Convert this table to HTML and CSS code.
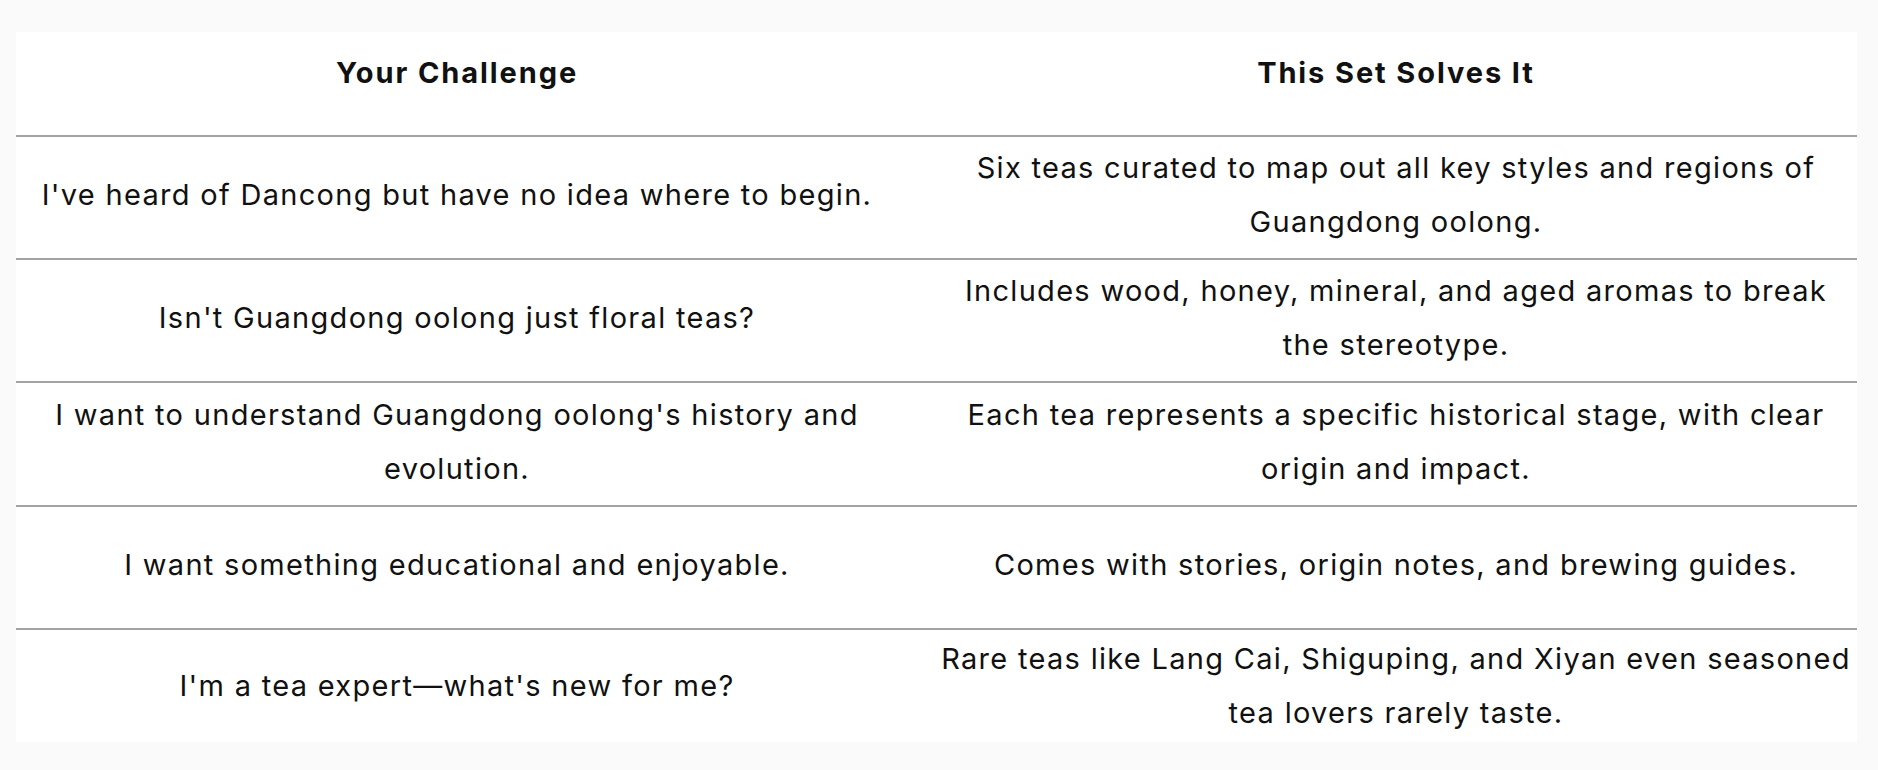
FILE: index.html
```html
<!DOCTYPE html>
<html lang="en">
<head>
<meta charset="utf-8">
<title>Your Challenge / This Set Solves It</title>
<link rel="stylesheet" href="styles.css">
</head>
<body>
<section class="compare">
  <div class="row head">
    <div class="cell">Your Challenge</div>
    <div class="cell">This Set Solves It</div>
  </div>
  <div class="row">
    <div class="cell">I've heard of Dancong but have no idea where to begin.</div>
    <div class="cell">Six teas curated to map out all key styles and regions of Guangdong oolong.</div>
  </div>
  <div class="row">
    <div class="cell">Isn't Guangdong oolong just floral teas?</div>
    <div class="cell">Includes wood, honey, mineral, and aged aromas to break the stereotype.</div>
  </div>
  <div class="row tall">
    <div class="cell">I want to understand Guangdong oolong's history and evolution.</div>
    <div class="cell">Each tea represents a specific historical stage, with clear origin and impact.</div>
  </div>
  <div class="row">
    <div class="cell">I want something educational and enjoyable.</div>
    <div class="cell">Comes with stories, origin notes, and brewing guides.</div>
  </div>
  <div class="row last">
    <div class="cell">I'm a tea expert—what's new for me?</div>
    <div class="cell">Rare teas like Lang Cai, Shiguping, and Xiyan even seasoned tea lovers rarely taste.</div>
  </div>
</section>
</body>
</html>
```
FILE: styles.css
```css
html, body {
  margin: 0;
  padding: 0;
}
body {
  background: #fafafa;
  font-family: "Inter", "Open Sans", sans-serif;
  color: #111;
}
.compare {
  width: 1841px;
  margin: 32px 0 0 16px;
  background: #fff;
}
.row {
  display: grid;
  grid-template-columns: 882px 912px;
  column-gap: 42px;
  align-items: center;
  box-sizing: border-box;
  height: 123px;
  padding-bottom: 5px;
  border-bottom: 2px solid #a3a3a3;
}
.row.tall {
  height: 124px;
}
.row.head {
  height: 105px;
  padding-bottom: 22px;
}
.row.last {
  height: 112px;
  padding-bottom: 0;
  border-bottom: none;
}
.cell {
  text-align: center;
  font-size: 29px;
  line-height: 54px;
  letter-spacing: 1.3px;
  font-weight: 400;
}
.head .cell {
  font-weight: 700;
  letter-spacing: 1.9px;
}
```
